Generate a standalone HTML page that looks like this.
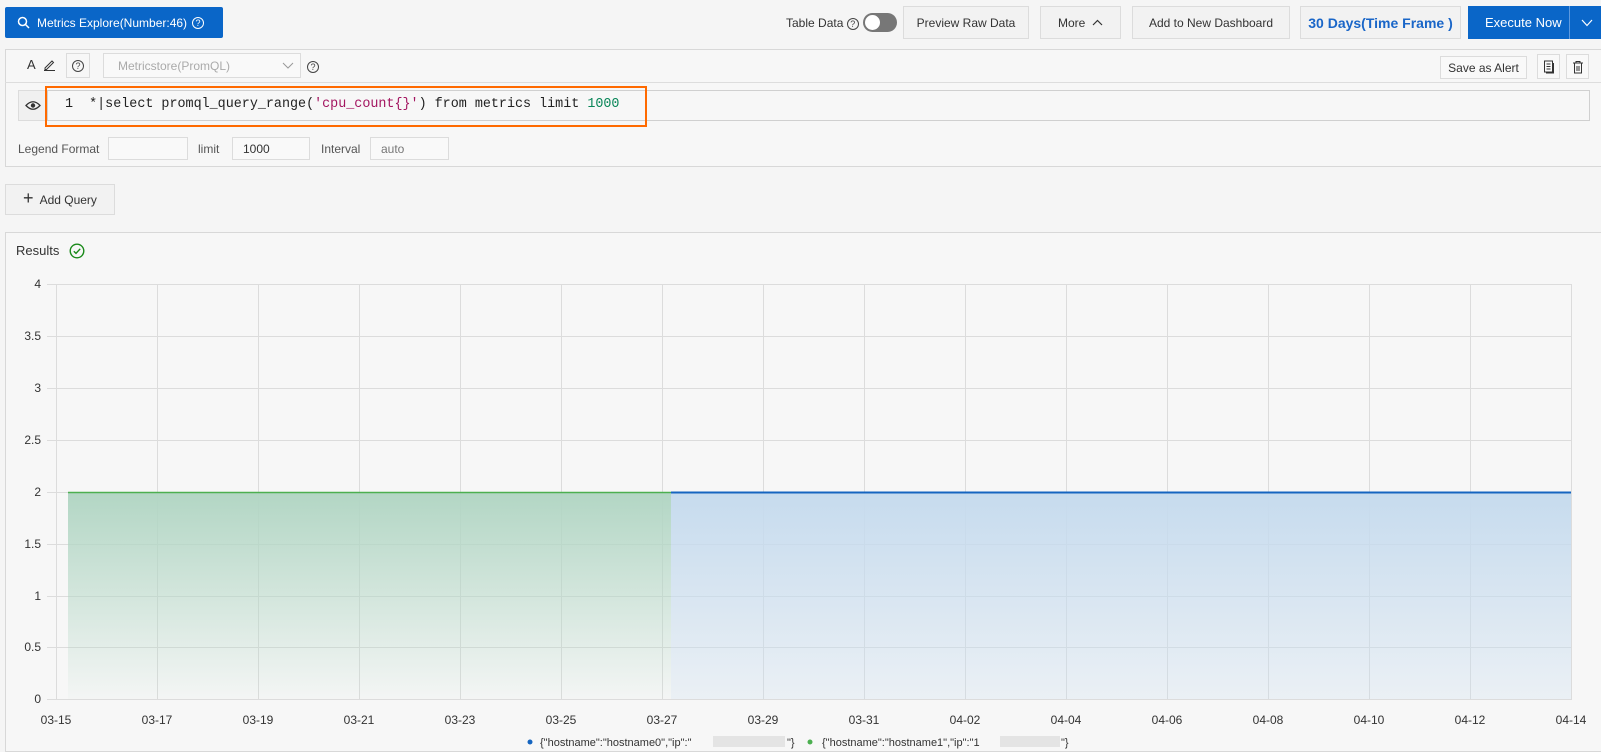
<!DOCTYPE html>
<html><head><meta charset="utf-8"><style>
*{box-sizing:border-box;margin:0;padding:0}
body{width:1601px;height:749px;overflow:hidden;background:#f5f5f5;font-family:"Liberation Sans",sans-serif;font-size:12px;color:#333;position:relative}
.a{position:absolute}
.btn{position:absolute;border:1px solid #dcdcdc;background:#f2f2f2;display:flex;align-items:center;justify-content:center;font-size:12px;color:#333}
.inp{position:absolute;border:1px solid #dcdcdc;background:#f9f9f9;font-size:12px;color:#333;padding-left:10px;display:flex;align-items:center}
.q{display:inline-block;width:12px;height:12px;border:1px solid #444;border-radius:50%;font-size:9px;line-height:10px;text-align:center;color:#444}
</style></head><body>
<div class="a" style="left:5px;top:7px;width:218px;height:31px;background:#0a66c8;border-radius:2px;color:#fff;font-size:12px;display:flex;align-items:center;padding-left:12px">
<svg width="13" height="13" viewBox="0 0 13 13"><circle cx="5.5" cy="5.5" r="4" stroke="#fff" stroke-width="1.5" fill="none"/><path d="M8.5 8.5L12 12" stroke="#fff" stroke-width="1.5"/></svg>
<span style="margin-left:7px">Metrics Explore(Number:46)</span><span class="q" style="border-color:#fff;color:#fff;margin-left:5px">?</span></div>

<div class="a" style="left:786px;top:16px;font-size:12px">Table Data <span class="q">?</span></div>
<div class="a" style="left:863px;top:13px;width:34px;height:19px;border-radius:10px;background:#777"><div style="position:absolute;left:2px;top:2px;width:15px;height:15px;border-radius:50%;background:#fff"></div></div>
<div class="btn" style="left:903px;top:6px;width:126px;height:33px">Preview Raw Data</div>
<div class="btn" style="left:1040px;top:6px;width:81px;height:33px">More &nbsp;<svg width="11" height="7"><path d="M1 6L5.5 1.5L10 6" stroke="#333" fill="none" stroke-width="1.2"/></svg></div>
<div class="btn" style="left:1132px;top:6px;width:158px;height:33px">Add to New Dashboard</div>
<div class="btn" style="left:1300px;top:6px;width:161px;height:33px;color:#1a66c8;font-size:14px;font-weight:bold">30 Days(Time Frame )</div>
<div class="a" style="left:1468px;top:6px;width:133px;height:33px;background:#0a66c8;color:#fff;font-size:13px;display:flex;align-items:center"><span style="margin-left:17px">Execute Now</span><div style="position:absolute;left:101px;top:0;width:1px;height:33px;background:#5e9adf"></div><svg class="a" style="left:113px;top:13px" width="12" height="8"><path d="M1 1L6 6.5L11 1" stroke="#fff" fill="none" stroke-width="1.2"/></svg></div>

<div class="a" style="left:5px;top:49px;width:1600px;height:118px;border:1px solid #d8d8d8;background:#f7f7f7"></div>
<div class="a" style="left:5px;top:82px;width:1600px;height:1px;background:#ddd"></div>
<div class="a" style="left:27px;top:57px;font-size:13px">A</div>
<svg class="a" style="left:43px;top:58px" width="13" height="13"><path d="M2 10L9 3L10.5 4.5L3.5 11.5H2Z M1 12.5H12" stroke="#333" fill="none" stroke-width="1"/></svg>
<div class="btn" style="left:66px;top:53px;width:24px;height:25px;background:#f7f7f7"><span class="q">?</span></div>
<div class="inp" style="left:103px;top:53px;width:198px;height:25px;color:#aaa;padding-left:14px">Metricstore(PromQL)<svg class="a" style="left:178px;top:8px" width="12" height="8"><path d="M1 1L6 6L11 1" stroke="#999" fill="none"/></svg></div>
<div class="a" style="left:307px;top:59px"><span class="q">?</span></div>
<div class="btn" style="left:1440px;top:56px;width:87px;height:23px;background:#f9f9f9">Save as Alert</div>
<div class="btn" style="left:1537px;top:54px;width:23px;height:25px;background:#f9f9f9"><svg width="12" height="14"><rect x="1.5" y="1" width="8" height="11" stroke="#333" fill="none"/><path d="M3.5 4H7.5M3.5 6.5H7.5M3.5 9H7.5M10.5 3V13H3" stroke="#333" fill="none"/></svg></div>
<div class="btn" style="left:1566px;top:54px;width:23px;height:25px;background:#f9f9f9"><svg width="12" height="14"><path d="M1 3H11M4 3V1.5H8V3M2.5 3.5V13H9.5V3.5M5 6V11M7 6V11" stroke="#333" fill="none"/></svg></div>

<div class="btn" style="left:18px;top:90px;width:29px;height:31px;background:#f0f0f0"><svg width="16" height="11"><path d="M1 5.5Q8 -2 15 5.5Q8 13 1 5.5Z" stroke="#333" fill="none" stroke-width="1.3"/><circle cx="8" cy="5.5" r="2.2" fill="#333"/></svg></div>
<div class="a" style="left:47px;top:90px;width:1543px;height:31px;border:1px solid #d0d0d0;background:#f7f7f7"></div>
<div class="a" style="left:45px;top:86px;width:602px;height:41px;border:2px solid #ff6a00"></div>
<div class="a" style="left:65px;top:97px;font-family:'Liberation Mono',monospace;font-size:13.4px;color:#222;white-space:pre">1  *|select promql_query_range(<span style="color:#a31560">'cpu_count{}'</span>) from metrics limit <span style="color:#098658">1000</span></div>

<div class="a" style="left:18px;top:142px;color:#555">Legend Format</div>
<div class="inp" style="left:108px;top:137px;width:80px;height:23px"></div>
<div class="a" style="left:198px;top:142px;color:#555">limit</div>
<div class="inp" style="left:232px;top:137px;width:78px;height:23px">1000</div>
<div class="a" style="left:321px;top:142px;color:#555">Interval</div>
<div class="inp" style="left:370px;top:137px;width:79px;height:23px;color:#777">auto</div>

<div class="btn" style="left:5px;top:184px;width:110px;height:31px"><span style="font-size:18px;font-weight:300;margin-right:6px;margin-top:-3px">+</span>Add Query</div>

<div class="a" style="left:5px;top:232px;width:1600px;height:520px;border:1px solid #d8d8d8;background:#f7f7f7"></div>
<div class="a" style="left:16px;top:243px;font-size:13px">Results</div>
<svg class="a" style="left:69px;top:243px" width="16" height="16"><circle cx="8" cy="8" r="6.8" stroke="#1a8a1a" stroke-width="1.4" fill="none"/><path d="M4.8 8.2L7 10.4L11.2 5.8" stroke="#1a8a1a" stroke-width="1.4" fill="none"/></svg>

<svg class="a" style="left:0;top:0" width="1601" height="749" font-family="Liberation Sans" font-size="12" fill="#333">
<defs>
<linearGradient id="g" x1="0" y1="0" x2="0" y2="1"><stop offset="0" stop-color="#b2d6c4"/><stop offset="1" stop-color="#b2d6c4" stop-opacity="0.05"/></linearGradient>
<linearGradient id="b" x1="0" y1="0" x2="0" y2="1"><stop offset="0" stop-color="#c6dbee"/><stop offset="1" stop-color="#c6dbee" stop-opacity="0.25"/></linearGradient>
</defs>
<g stroke="#dcdcdc" stroke-width="1">
<line x1="47" y1="284.5" x2="1571" y2="284.5"/><line x1="47" y1="336.5" x2="1571" y2="336.5"/><line x1="47" y1="388.5" x2="1571" y2="388.5"/><line x1="47" y1="440.5" x2="1571" y2="440.5"/><line x1="47" y1="492.5" x2="1571" y2="492.5"/><line x1="47" y1="544.5" x2="1571" y2="544.5"/><line x1="47" y1="596.5" x2="1571" y2="596.5"/><line x1="47" y1="647.5" x2="1571" y2="647.5"/><line x1="47" y1="699.5" x2="1571" y2="699.5"/>
<line x1="56.5" y1="284" x2="56.5" y2="700"/><line x1="157.5" y1="284" x2="157.5" y2="700"/><line x1="258.5" y1="284" x2="258.5" y2="700"/><line x1="359.5" y1="284" x2="359.5" y2="700"/><line x1="460.5" y1="284" x2="460.5" y2="700"/><line x1="561.5" y1="284" x2="561.5" y2="700"/><line x1="662.5" y1="284" x2="662.5" y2="700"/><line x1="763.5" y1="284" x2="763.5" y2="700"/><line x1="864.5" y1="284" x2="864.5" y2="700"/><line x1="965.5" y1="284" x2="965.5" y2="700"/><line x1="1066.5" y1="284" x2="1066.5" y2="700"/><line x1="1167.5" y1="284" x2="1167.5" y2="700"/><line x1="1268.5" y1="284" x2="1268.5" y2="700"/><line x1="1369.5" y1="284" x2="1369.5" y2="700"/><line x1="1470.5" y1="284" x2="1470.5" y2="700"/><line x1="1571.5" y1="284" x2="1571.5" y2="700"/>
</g>
<rect x="68" y="492" width="603" height="207" fill="url(#g)"/>
<rect x="671" y="492" width="900" height="207" fill="url(#b)"/>
<line x1="68" y1="492.5" x2="671" y2="492.5" stroke="#4caf50" stroke-width="1.5"/>
<line x1="671" y1="492.5" x2="1571" y2="492.5" stroke="#1565c0" stroke-width="2"/>
<g text-anchor="end"><text x="41" y="288">4</text><text x="41" y="340">3.5</text><text x="41" y="392">3</text><text x="41" y="444">2.5</text><text x="41" y="496">2</text><text x="41" y="548">1.5</text><text x="41" y="600">1</text><text x="41" y="651">0.5</text><text x="41" y="703">0</text></g>
<g text-anchor="middle"><text x="56" y="724">03-15</text><text x="157" y="724">03-17</text><text x="258" y="724">03-19</text><text x="359" y="724">03-21</text><text x="460" y="724">03-23</text><text x="561" y="724">03-25</text><text x="662" y="724">03-27</text><text x="763" y="724">03-29</text><text x="864" y="724">03-31</text><text x="965" y="724">04-02</text><text x="1066" y="724">04-04</text><text x="1167" y="724">04-06</text><text x="1268" y="724">04-08</text><text x="1369" y="724">04-10</text><text x="1470" y="724">04-12</text><text x="1571" y="724">04-14</text></g>
<circle cx="530" cy="742" r="2.5" fill="#1565c0"/>
<text x="540" y="746" font-size="11">{"hostname":"hostname0","ip":"</text>
<rect x="713" y="736" width="72" height="11" fill="#e4e4e4"/>
<text x="787" y="746" font-size="11">"}</text>
<circle cx="810" cy="742" r="2.5" fill="#4caf50"/>
<text x="822" y="746" font-size="11">{"hostname":"hostname1","ip":"1</text>
<rect x="1000" y="736" width="60" height="11" fill="#e4e4e4"/>
<text x="1061" y="746" font-size="11">"}</text>
</svg>
</body></html>
